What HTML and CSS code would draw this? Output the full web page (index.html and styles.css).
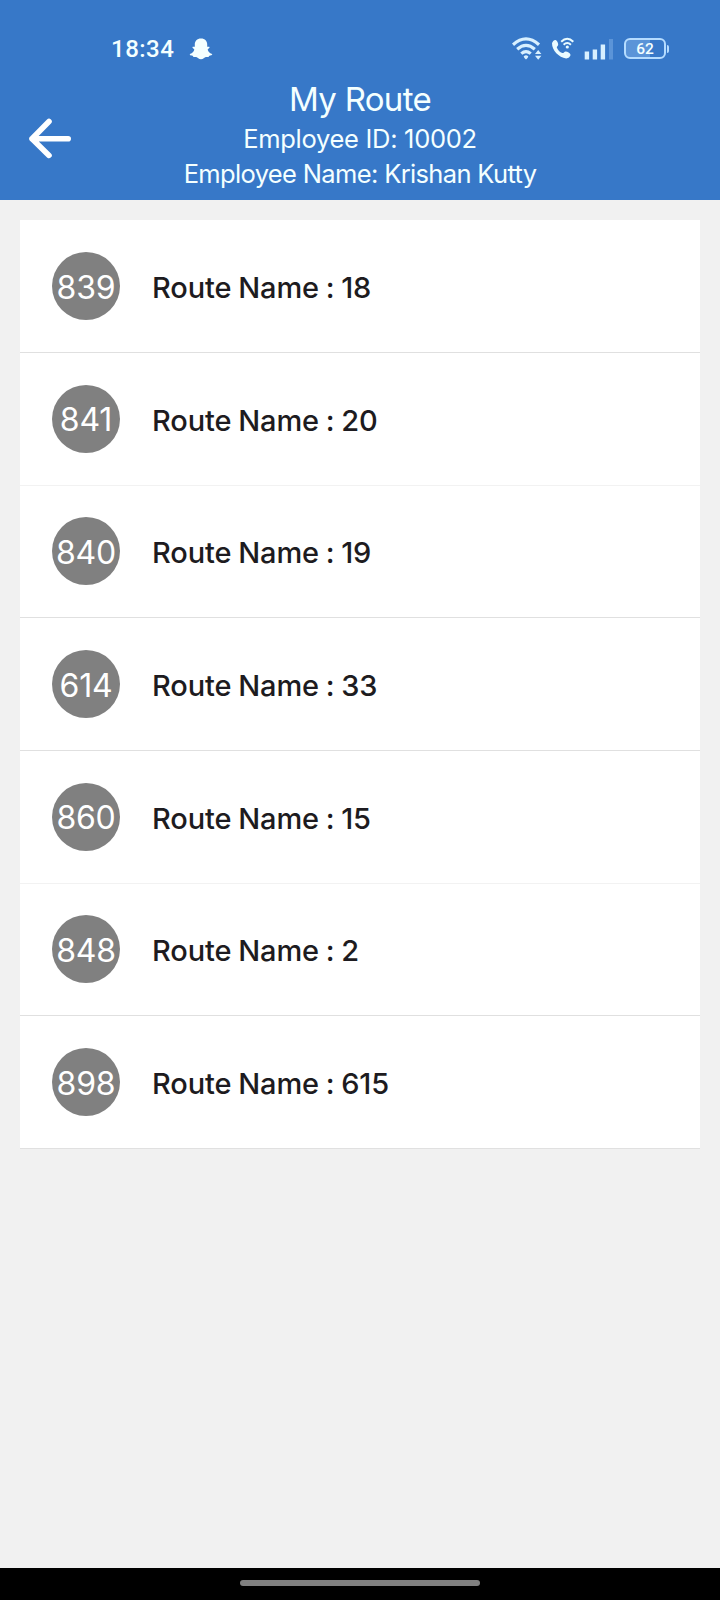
FILE: index.html
```html
<!DOCTYPE html>
<html lang="en">
    <head>
        <meta charset="UTF-8" />
        <meta name="viewport" content="width=device-width, initial-scale=1.0" />
        <title>My Route</title>
        <link rel="stylesheet" href="styles.css">
    </head>
    <body>
        <header class="header">
            <div class="status">
                <span class="clock">18:34</span>
                <svg class="ghost" width="24" height="22" viewBox="0 0 24 22" fill="#f4ffff">
                    <path d="M12 0.5C8 0.5 5.7 3.2 5.8 6.4V8.7C5 9 3.7 8.4 3.4 9.2C3.2 10.1 5.3 10.6 5.3 11.7C4.8 14 2.7 15.4.8 16C.5 17.4 3.4 17.6 3.9 18C4.2 19.4 5 18.8 7.1 19C8.7 19.2 9.7 21.2 12 21.2S15.3 19.2 16.9 19C19 18.8 19.8 19.4 20.1 18C20.6 17.6 23.5 17.4 23.2 16C21.3 15.4 19.2 14 18.7 11.7C18.7 10.6 20.8 10.1 20.6 9.2C20.3 8.4 19 9 18.2 8.7V6.4C18.3 3.2 16 .5 12 .5Z"/>
                </svg>
                <div class="status-icons">
                    <svg width="30" height="24" viewBox="0 0 30 24" fill="none" stroke="#d8f0ff" stroke-width="3.2">
                        <path d="M1 7.7Q14 -3.8 27 7.7M5.2 12.2Q14 4.6 22.8 12.2M9.3 16.6Q14 12.6 18.7 16.6"/>
                        <path d="M11.8 19.2Q14 17.2 16.2 19.2Q16.6 20 14 22.6Q11.4 20 11.8 19.2ZM23 16.9L26.2 13L29.4 16.9ZM23 18.8L26.2 22.7L29.4 18.8Z" fill="#d8f0ff" stroke="none"/>
                    </svg>
                    <svg width="23" height="23" viewBox="0 0 23 23">
                        <path d="M1 6.2C1.3 4.7 3.2 2.7 4.6 3C6.2 3.7 7.3 6.4 7.2 7.7C7.1 9 5.8 9.3 5.8 10.5C6.7 13 9 15.3 11.3 16.1C12.8 16.1 13.2 14.5 14.6 14.4C16.5 14.4 19.2 16 19.5 17.7C19.6 19.3 17.2 21.6 15.1 21.4C7.9 20.5 1 13.3 1 6.2Z" fill="#eafbff"/>
                        <path d="M10.2 4.8Q16.2 -1.3 22.3 4.8M12.6 7.7Q16.2 4.2 19.9 7.7" fill="none" stroke="#eafbff" stroke-width="2"/>
                        <circle cx="16.3" cy="10" r="1.6" fill="#eafbff"/>
                    </svg>
                    <svg class="signal" width="30" height="22" viewBox="0 0 30 22" fill="#d8f0ff">
                        <path d="M.7 13.5h4.4v8H.7zM8.7 11.5h4.4v10H8.7zM16.7 6.5h4.4v15h-4.4z"/>
                        <path d="M25 1h4v20.5h-4z" fill="#5b94d8"/>
                    </svg>
                    <div class="battery"><span>62</span></div>
                </div>
            </div>
            <div class="toolbar">
                <svg class="back" width="46" height="44" viewBox="0 0 46 44" fill="none" stroke="#fff" stroke-width="5.6" stroke-linecap="round" stroke-linejoin="round">
                    <path d="M41.2 21.7H5M22 4.5L5 21.7L22 38.4"/>
                </svg>
                <div class="titles">
                    <h1>My Route</h1>
                    <p class="emp-id">Employee ID: 10002</p>
                    <p class="emp-name">Employee Name: Krishan Kutty</p>
                </div>
            </div>
        </header>
        <main class="content">
            <ul class="routes">
                <li><span class="badge">839</span><span class="name">Route Name : 18</span></li>
                <li><span class="badge">841</span><span class="name">Route Name : 20</span></li>
                <li><span class="badge">840</span><span class="name">Route Name : 19</span></li>
                <li><span class="badge">614</span><span class="name">Route Name : 33</span></li>
                <li><span class="badge">860</span><span class="name">Route Name : 15</span></li>
                <li><span class="badge">848</span><span class="name">Route Name : 2</span></li>
                <li><span class="badge">898</span><span class="name">Route Name : 615</span></li>
            </ul>
        </main>
        <footer class="navbar"><div class="handle"></div></footer>
    </body>
</html>
```
FILE: styles.css
```css
* {
    box-sizing: border-box;
}
body {
    margin: 0;
    height: 1600px;
    display: flex;
    flex-direction: column;
    background: #f1f1f1;
    font-family: Inter, "Liberation Sans", sans-serif;
}
.header {
    height: 200px;
    background: #3778c8;
    color: #f4ffff;
}
.status {
    display: flex;
    align-items: center;
    height: 80px;
    padding: 17px 51px 0 111px;
}
.clock {
    width: 78px;
    font: 500 24px Roboto, sans-serif;
    letter-spacing: 0.5px;
}
.status-icons {
    display: flex;
    align-items: center;
    gap: 9px;
    margin-left: auto;
}
.signal {
    margin-left: 1px;
}
.battery {
    display: flex;
    align-items: center;
    justify-content: center;
    position: relative;
    width: 42px;
    height: 21px;
    margin: 0 3px 0 1px;
    border: 2px solid #b5dcff;
    border-radius: 6px;
    background: linear-gradient(90deg, #5b94d8 62%, transparent 62%);
    font: 500 15.5px Roboto, sans-serif;
}
.battery::after {
    content: "";
    position: absolute;
    right: -5px;
    width: 2px;
    height: 8px;
    border-radius: 0 2px 2px 0;
    background: #b5dcff;
}
.toolbar {
    display: grid;
    grid-template-columns: 46px 1fr 46px;
    padding: 0 27px;
}
.back {
    margin-top: 37px;
}
.titles {
    text-align: center;
    white-space: nowrap;
}
.titles h1,
.titles p {
    margin: 0;
    font-weight: 400;
}
.titles h1 {
    margin-bottom: 2px;
    font-size: 33px;
    line-height: 39px;
    letter-spacing: -0.7px;
}
.titles p {
    font-size: 25.5px;
    line-height: 35px;
    letter-spacing: -0.3px;
}
.titles .emp-name {
    letter-spacing: -0.65px;
}
.content {
    flex: 1;
    padding: 20.3px 20px 0;
}
.routes {
    margin: 0;
    padding: 0;
    list-style: none;
    background: #fff;
}
.routes li {
    display: flex;
    align-items: center;
    gap: 32px;
    height: 132.67px;
    padding-left: 32px;
    border-bottom: 1px solid #e0e0e0;
}
.routes li:nth-child(3n + 2) {
    border-bottom-color: #f2f2f2;
}
.badge {
    display: flex;
    align-items: center;
    justify-content: center;
    width: 68px;
    height: 68px;
    padding-top: 2px;
    border-radius: 50%;
    background: #808080;
    color: #fff;
    font-size: 32px;
    letter-spacing: -0.2px;
}
.name {
    color: #1d1b20;
    font-size: 29px;
    font-weight: 500;
    letter-spacing: -0.1px;
    word-spacing: -0.9px;
    padding-top: 3px;
}
.navbar {
    display: flex;
    justify-content: center;
    height: 32px;
    padding-top: 12px;
    background: #000;
}
.handle {
    width: 240px;
    height: 6px;
    border-radius: 3px;
    background: #808080;
}
```
